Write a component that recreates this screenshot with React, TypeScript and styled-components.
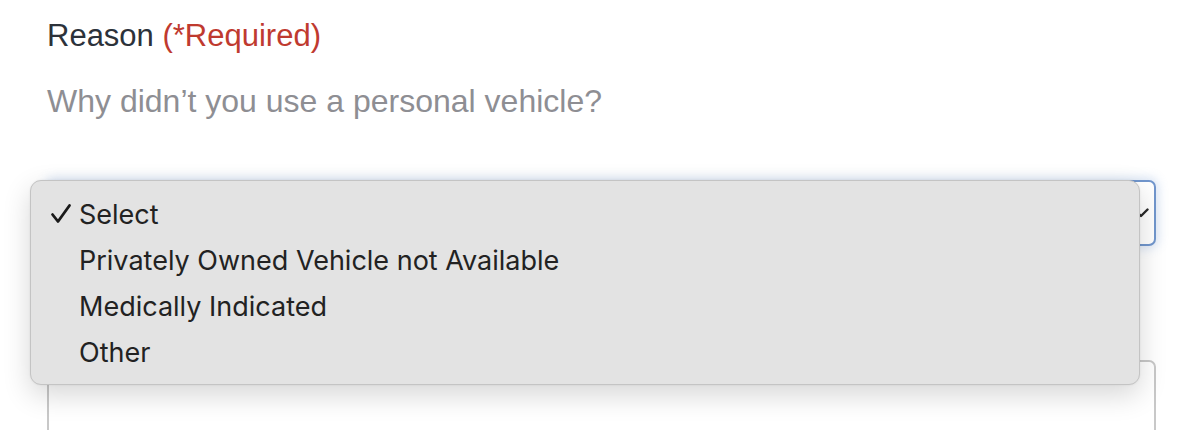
import React, { useState } from "react";
import styled, { createGlobalStyle } from "styled-components";

const GlobalStyle = createGlobalStyle`
  html, body {
    margin: 0;
    padding: 0;
    background: #ffffff;
  }
  body {
    font-family: "Liberation Sans", Arial, sans-serif;
  }
`;

const OPTIONS = [
  "Select",
  "Privately Owned Vehicle not Available",
  "Medically Indicated",
  "Other",
];

const App = () => {
  const [selected] = useState(0);

  return (
    <>
      <GlobalStyle />
      <Page>
        <Label>
          Reason <Required>(*Required)</Required>
        </Label>
        <Hint>Why didn’t you use a personal vehicle?</Hint>

        <SelectWrap>
          <SelectBox>
            <Chevron width="16" height="10" viewBox="0 0 16 10">
              <path d="M1.5 1.5 L8 8 L14.5 1.5" />
            </Chevron>
          </SelectBox>

          <Menu role="listbox">
            {OPTIONS.map((opt, i) => (
              <MenuItem key={opt} role="option" aria-selected={i === selected}>
                <CheckSlot>
                  {i === selected && (
                    <svg width="22" height="22" viewBox="0 0 22 22">
                      <path
                        d="M2.5 11.5 L8 18.5 L19.5 2.5"
                        fill="none"
                        stroke="#1a1a1a"
                        strokeWidth="2.8"
                        strokeLinecap="round"
                        strokeLinejoin="round"
                      />
                    </svg>
                  )}
                </CheckSlot>
                {opt}
              </MenuItem>
            ))}
          </Menu>
        </SelectWrap>

        <TextArea />
      </Page>
    </>
  );
};

const Page = styled.div`
  padding: 18px 40px 0 47px;
  width: 1109px;
`;

const Label = styled.div`
  font-size: 31px;
  line-height: 36px;
  color: #2c323a;
`;

const Required = styled.span`
  color: #bf3a2f;
`;

const Hint = styled.div`
  margin-top: 29px;
  font-size: 32px;
  line-height: 36px;
  color: #8e8e93;
`;

const SelectWrap = styled.div`
  position: relative;
  margin-top: 61px;
`;

const SelectBox = styled.div`
  box-sizing: border-box;
  height: 66px;
  border: 2px solid #7196cd;
  border-radius: 7px;
  background: #ffffff;
  box-shadow: 0 0 10px 3px rgba(120, 160, 220, 0.25);
  display: flex;
  align-items: center;
  justify-content: flex-end;
  padding-right: 5px;
`;

const Chevron = styled.svg`
  fill: none;
  stroke: #2a2a2a;
  stroke-width: 2.4;
  stroke-linecap: round;
  stroke-linejoin: round;
`;

const Menu = styled.div`
  position: absolute;
  top: 0;
  left: -17px;
  width: 1110px;
  box-sizing: border-box;
  padding: 10px 0 9px;
  background: #e3e3e3;
  border: 1px solid #c4c4c4;
  border-radius: 11px;
  box-shadow: 0 10px 28px rgba(0, 0, 0, 0.16), 0 0 2px rgba(0, 0, 0, 0.08);
  z-index: 2;
`;

const MenuItem = styled.div`
  display: flex;
  align-items: center;
  height: 46px;
  padding-left: 19px;
  font-family: Inter, "Noto Sans", sans-serif;
  font-size: 27px;
  color: #222222;
`;

const CheckSlot = styled.span`
  width: 29px;
  height: 22px;
  display: flex;
  align-items: center;
`;

const TextArea = styled.div`
  box-sizing: border-box;
  margin-top: 114px;
  height: 120px;
  border: 2px solid #c8c8c8;
  border-radius: 7px;
  background: #ffffff;
`;

export default App;
